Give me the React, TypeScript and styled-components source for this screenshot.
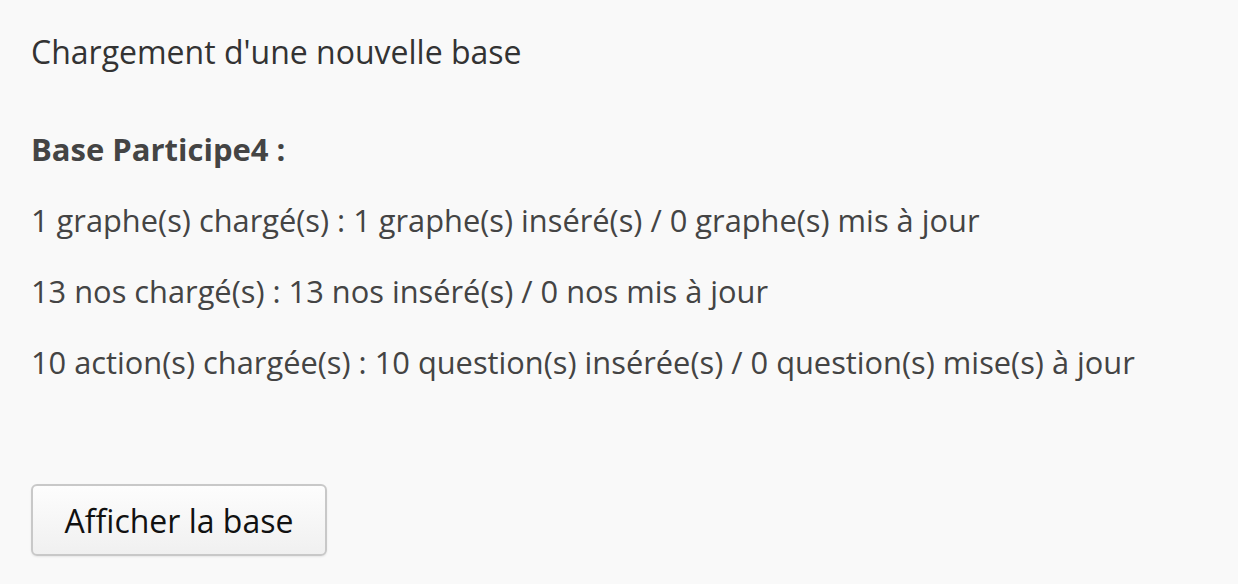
import React from "react";
import styled, { createGlobalStyle } from "styled-components";

const Global = createGlobalStyle`
  html, body { margin: 0; padding: 0; background: #f9f9f9; }
  body { font-family: "Open Sans", "Liberation Sans", sans-serif; }
`;

const Page = styled.div`
  padding: 30px 31px;
  display: flex;
  flex-direction: column;
  color: #444;
`;

const Title = styled.h1`
  margin: 0 0 53px;
  font-size: 32px;
  font-weight: 400;
  line-height: 44px;
  color: #333;
`;

const BaseName = styled.h2`
  margin: 0 0 27px;
  font-size: 31px;
  font-weight: 700;
  line-height: 44px;
  color: #444;
`;

const Line = styled.p`
  margin: 0 0 27px;
  font-size: 30.8px;
  line-height: 44px;
  white-space: nowrap;
`;

const Button = styled.button`
  align-self: flex-start;
  margin-top: 73px;
  width: 296px;
  height: 72px;
  padding: 0;
  font-family: inherit;
  font-size: 32px;
  color: #111;
  background: linear-gradient(#fdfdfd, #f0f0f0);
  border: 2px solid #c8c8c8;
  border-radius: 6px;
  box-shadow: 0 1px 2px rgba(0,0,0,0.08);
  cursor: pointer;
`;

export default function App() {
  return (
    <>
      <Global />
      <Page>
        <Title>Chargement d'une nouvelle base</Title>
        <BaseName>Base Participe4 :</BaseName>
        <Line>1 graphe(s) chargé(s) : 1 graphe(s) inséré(s) / 0 graphe(s) mis à jour</Line>
        <Line>13 nos chargé(s) : 13 nos inséré(s) / 0 nos mis à jour</Line>
        <Line>10 action(s) chargée(s) : 10 question(s) insérée(s) / 0 question(s) mise(s) à jour</Line>
        <Button>Afficher la base</Button>
      </Page>
    </>
  );
}
